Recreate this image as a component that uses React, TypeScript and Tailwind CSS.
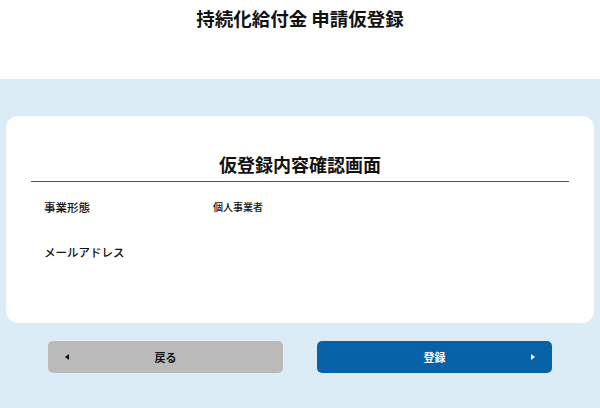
export default function App() {
  const font = { fontFamily: '"Noto Sans CJK JP", "Noto Sans", sans-serif' };

  return (
    <div className="min-h-[408px] w-full bg-[#dcecf6] text-[#111]" style={font}>
      {/* header */}
      <header className="h-[79px] bg-white pt-[5px] text-center">
        <h1 className="text-[18.5px] font-bold leading-[26px]">持続化給付金 申請仮登録</h1>
      </header>

      {/* confirmation card */}
      <section className="mx-[6px] mt-[37px] rounded-[12px] bg-white px-[25px] pt-[35px] pb-[61px]">
        <h2 className="border-b border-[#1f5f96] pb-[4px] text-center text-[18px] font-bold leading-[26px]">
          仮登録内容確認画面
        </h2>
        <dl className="mt-[15px] flex flex-col gap-[25px] pl-[13px]">
          <div className="flex items-center leading-[20px]">
            <dt className="w-[169px] text-[11.5px] font-medium">事業形態</dt>
            <dd className="text-[10px] font-medium">個人事業者</dd>
          </div>
          <div className="flex items-center leading-[20px]">
            <dt className="w-[169px] text-[11.5px] font-medium">メールアドレス</dt>
            <dd className="text-[10px] font-medium"></dd>
          </div>
        </dl>
      </section>

      {/* actions */}
      <div className="mt-[18px] flex justify-center gap-[34px] pb-[35px]">
        <button className="relative flex h-[32px] w-[235px] items-center justify-center rounded-[5px] bg-[#bababa] text-[11px] font-bold">
          <span className="absolute left-[17px] top-1/2 h-0 w-0 -translate-y-1/2 border-y-[3px] border-r-[4px] border-y-transparent border-r-[#111]" />
          戻る
        </button>
        <button className="relative flex h-[32px] w-[235px] items-center justify-center rounded-[5px] bg-[#0762a8] text-[11px] font-bold text-white">
          登録
          <span className="absolute right-[17px] top-1/2 h-0 w-0 -translate-y-1/2 border-y-[3px] border-l-[4px] border-y-transparent border-l-white" />
        </button>
      </div>
    </div>
  );
}
